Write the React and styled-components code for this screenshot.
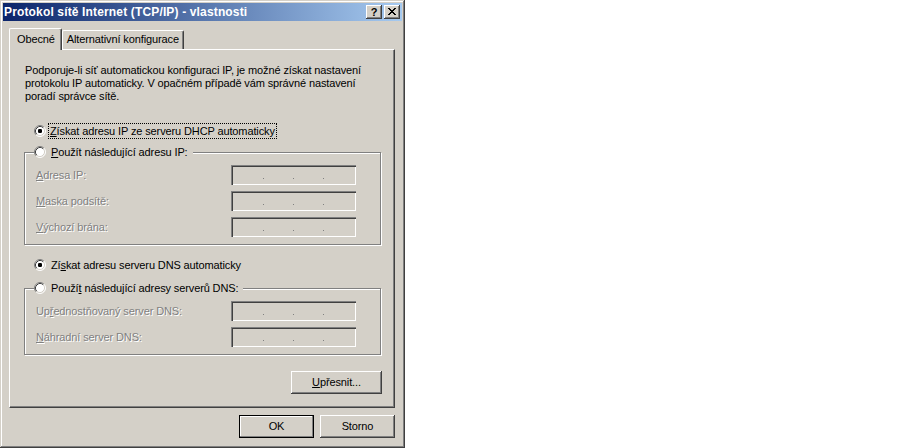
import React from "react";
import styled, { createGlobalStyle } from "styled-components";

const GlobalStyle = createGlobalStyle`
  body {
    margin: 0;
    background: #ffffff;
  }
`;

const Window = styled.div`
  width: 405px;
  height: 448px;
  box-sizing: border-box;
  padding: 3px;
  background: #d4d0c8;
  box-shadow: inset -1px -1px #404040, inset 1px 1px #d4d0c8,
    inset -2px -2px #808080, inset 2px 2px #ffffff;
  font-family: "Liberation Sans", Arial, sans-serif;
  font-size: 11px;
  letter-spacing: -0.12px;
  color: #000;
  display: flex;
  flex-direction: column;
`;

const TitleBar = styled.div`
  height: 18px;
  display: flex;
  align-items: center;
  padding: 0 2px 0 1px;
  background: linear-gradient(to right, #0a246a, #a6caf0);
`;

const Title = styled.div`
  flex: 1;
  color: #ffffff;
  font-weight: bold;
  font-size: 12px;
  letter-spacing: 0.15px;
  white-space: nowrap;
`;

const TitleButton = styled.div`
  width: 16px;
  height: 14px;
  box-sizing: border-box;
  margin-left: ${({ gap }) => gap || 0}px;
  background: #d4d0c8;
  box-shadow: inset -1px -1px #404040, inset 1px 1px #ffffff,
    inset -2px -2px #808080, inset 2px 2px #d4d0c8;
  display: flex;
  align-items: center;
  justify-content: center;
  font-weight: bold;
  font-size: 11px;
  line-height: 14px;
  padding-bottom: 1px;
`;

const Body = styled.div`
  flex: 1;
  display: flex;
  flex-direction: column;
  padding: 7px 7px 0 6px;
`;

const TabStrip = styled.div`
  height: 21px;
  display: flex;
  align-items: flex-end;
`;

const Tab = styled.div`
  position: relative;
  z-index: ${({ active }) => (active ? 1 : 0)};
  box-sizing: border-box;
  height: ${({ active }) => (active ? 22 : 19)}px;
  margin-bottom: ${({ active }) => (active ? -1 : 0)}px;
  padding: ${({ active }) => (active ? "4px 6px 0 7px" : "2px 4px 0 4px")};
  background: #d4d0c8;
  border-top: 1px solid #ffffff;
  border-left: 1px solid #ffffff;
  border-right: 1px solid #404040;
  border-radius: 2px 2px 0 0;
  box-shadow: inset -1px 0 #808080;
  white-space: nowrap;
  line-height: 13px;
`;

const Panel = styled.div`
  height: 359px;
  box-sizing: border-box;
  border-top: 1px solid #ffffff;
  border-left: 1px solid #ffffff;
  border-right: 1px solid #404040;
  border-bottom: 1px solid #404040;
  box-shadow: inset -1px -1px #808080;
  padding: 14px 12px 0 14px;
  display: flex;
  flex-direction: column;
`;

const Description = styled.p`
  margin: 0 0 0 1px;
  line-height: 13px;
  white-space: nowrap;
`;

const RadioRow = styled.div`
  height: 16px;
  display: flex;
  align-items: center;
  margin-top: ${({ top }) => top || 0}px;
  padding-left: ${({ indent }) => indent || 0}px;
  background: #d4d0c8;
`;

const RadioText = styled.span`
  margin-left: ${({ focused }) => (focused ? 3 : 4)}px;
  padding: 0 1px;
  line-height: 14px;
  outline: ${({ focused }) => (focused ? "1px dotted #000" : "none")};
  white-space: nowrap;
`;

const GroupBox = styled.fieldset`
  margin: ${({ top }) => top}px 0 0 0;
  padding: 0 24px 7px 11px;
  width: 357px;
  box-sizing: border-box;
  border: 1px solid #808080;
  box-shadow: inset 1px 1px #ffffff, 1px 1px #ffffff;
  min-width: 0;
`;

const Legend = styled.legend`
  padding: 0 4px 0 0;
  margin-left: -2px;
  background: #d4d0c8;
`;

const FieldRow = styled.div`
  height: 20px;
  display: flex;
  align-items: center;
  justify-content: space-between;
  margin-top: ${({ first }) => (first ? 5 : 6)}px;
`;

const FieldLabel = styled.span`
  color: #808080;
  text-shadow: 1px 1px 0 #ffffff;
  white-space: nowrap;
`;

const IpBox = styled.div`
  width: 125px;
  height: 20px;
  box-sizing: border-box;
  padding: 0 3px 6px 3px;
  background: #d4d0c8;
  box-shadow: inset 1px 1px #808080, inset 2px 2px #404040,
    inset -1px -1px #ffffff, inset -2px -2px #d4d0c8;
  display: flex;
  align-items: flex-end;
`;

const IpSegment = styled.span`
  flex: 1;
`;

const IpDot = styled.span`
  width: 1px;
  height: 1px;
  background: #808080;
`;

const ButtonRow = styled.div`
  display: flex;
  justify-content: flex-end;
  gap: ${({ gap }) => gap || 0}px;
  margin-top: ${({ top }) => top || 0}px;
`;

const Button = styled.div`
  width: ${({ w }) => w || 75}px;
  height: 23px;
  box-sizing: border-box;
  display: flex;
  align-items: center;
  justify-content: center;
  background: #d4d0c8;
  border: ${({ primary }) => (primary ? "1px solid #000" : "none")};
  box-shadow: ${({ primary }) =>
    primary
      ? "inset -1px -1px #808080, inset 1px 1px #ffffff"
      : "inset -1px -1px #404040, inset 1px 1px #ffffff, inset -2px -2px #808080, inset 2px 2px #d4d0c8"};
  padding-bottom: 1px;
`;

function Radio({ checked }) {
  return (
    <svg width="12" height="12" viewBox="0 0 12 12">
      <circle cx="6" cy="6" r="5" fill="#ffffff" />
      <path d="M2.11 9.89 A5.5 5.5 0 0 1 9.89 2.11" stroke="#808080" strokeWidth="1" fill="none" />
      <path d="M9.89 2.11 A5.5 5.5 0 0 1 2.11 9.89" stroke="#ffffff" strokeWidth="1" fill="none" />
      <path d="M2.82 9.18 A4.5 4.5 0 0 1 9.18 2.82" stroke="#404040" strokeWidth="1" fill="none" />
      <path d="M9.18 2.82 A4.5 4.5 0 0 1 2.82 9.18" stroke="#d4d0c8" strokeWidth="1" fill="none" />
      {checked && <rect x="4" y="4" width="4" height="4" rx="1.2" fill="#000" />}
    </svg>
  );
}

function CloseGlyph() {
  return (
    <svg width="8" height="7" viewBox="0 0 8 7" shapeRendering="crispEdges">
      <path d="M0 0h2v1h-2zM6 0h2v1h-2zM1 1h2v1h-2zM5 1h2v1h-2zM2 2h4v1h-4zM3 3h2v1h-2zM2 4h4v1h-4zM1 5h2v1h-2zM5 5h2v1h-2zM0 6h2v1h-2zM6 6h2v1h-2z" fill="#000" />
    </svg>
  );
}

function IpField() {
  return (
    <IpBox>
      <IpSegment />
      <IpDot />
      <IpSegment />
      <IpDot />
      <IpSegment />
      <IpDot />
      <IpSegment />
    </IpBox>
  );
}

function Field({ first, children }) {
  return (
    <FieldRow first={first}>
      <FieldLabel>{children}</FieldLabel>
      <IpField />
    </FieldRow>
  );
}

export default function App() {
  return (
    <>
      <GlobalStyle />
      <Window>
        <TitleBar>
          <Title>Protokol sítě Internet (TCP/IP) - vlastnosti</Title>
          <TitleButton>?</TitleButton>
          <TitleButton gap={2}>
            <CloseGlyph />
          </TitleButton>
        </TitleBar>
        <Body>
          <TabStrip>
            <Tab active>Obecné</Tab>
            <Tab>Alternativní konfigurace</Tab>
          </TabStrip>
          <Panel>
            <Description>
              Podporuje-li síť automatickou konfiguraci IP, je možné získat nastavení
              <br />
              protokolu IP automaticky. V opačném případě vám správné nastavení
              <br />
              poradí správce sítě.
            </Description>

            <RadioRow top={20} indent={10}>
              <Radio checked />
              <RadioText focused>
                <u>Z</u>ískat adresu IP ze serveru DHCP automaticky
              </RadioText>
            </RadioRow>

            <GroupBox top={5}>
              <Legend>
                <RadioRow>
                  <Radio />
                  <RadioText>
                    <u>P</u>oužít následující adresu IP:
                  </RadioText>
                </RadioRow>
              </Legend>
              <Field first>
                <u>A</u>dresa IP:
              </Field>
              <Field>
                <u>M</u>aska podsítě:
              </Field>
              <Field>
                <u>V</u>ýchozí brána:
              </Field>
            </GroupBox>

            <RadioRow top={12} indent={10}>
              <Radio checked />
              <RadioText>
                Zí<u>s</u>kat adresu serveru DNS automaticky
              </RadioText>
            </RadioRow>

            <GroupBox top={7}>
              <Legend>
                <RadioRow>
                  <Radio />
                  <RadioText>
                    Použí<u>t</u> následující adresy serverů DNS:
                  </RadioText>
                </RadioRow>
              </Legend>
              <Field first>
                Up<u>ř</u>ednostňovaný server DNS:
              </Field>
              <Field>
                <u>N</u>áhradní server DNS:
              </Field>
            </GroupBox>

            <ButtonRow top={16}>
              <Button w={91}>
                <span>
                  <u>U</u>přesnit...
                </span>
              </Button>
            </ButtonRow>
          </Panel>
          <ButtonRow top={7} gap={6}>
            <Button primary>OK</Button>
            <Button>Storno</Button>
          </ButtonRow>
        </Body>
      </Window>
    </>
  );
}
